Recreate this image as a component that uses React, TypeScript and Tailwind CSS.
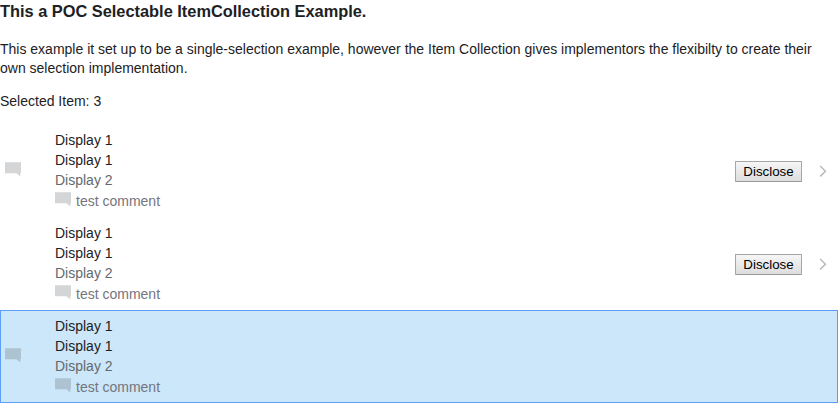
type Item = { id: number; commented: boolean; disclosable: boolean; selected: boolean };

const items: Item[] = [
  { id: 1, commented: true, disclosable: true, selected: false },
  { id: 2, commented: false, disclosable: true, selected: false },
  { id: 3, commented: true, disclosable: false, selected: true },
];

function CommentIcon() {
  return (
    <svg className="block h-[15px] w-4 shrink-0" viewBox="0 0 16 15" fill="#61656d" fillOpacity="0.27">
      <path d="M0 .3H16V11.2H15.3V14.6L11.3 11.2H0Z" />
    </svg>
  );
}

function Chevron() {
  return (
    <svg className="block h-3 w-2" viewBox="0 0 8 12" fill="none" stroke="#b8bcbd" strokeWidth="1.5">
      <path d="M1.2 1L6.4 6.2L1.2 11.4" />
    </svg>
  );
}

function Row({ item }: { item: Item }) {
  return (
    <li
      className={`flex h-[93px] border ${
        item.selected ? "border-[#5e9cfa] bg-[#cbe7f9]" : "border-transparent"
      }`}
    >
      <div className="w-[54px] shrink-0 pt-[37px] pl-1">{item.commented && <CommentIcon />}</div>
      <div className="flex-1 pt-[5px] leading-5">
        <div>Display 1</div>
        <div>Display 1</div>
        <div className="text-[#64696e]">Display 2</div>
        <div className="flex items-start gap-[5px] pt-px text-[#75757d]">
          <div className="pt-px">
            <CommentIcon />
          </div>
          <span>test comment</span>
        </div>
      </div>
      {item.disclosable && (
        <div className="flex items-start">
          <button className="mt-9 mr-[17px] h-[21px] w-[67px] rounded-[1px] border border-[#a6a6a6] border-b-[#999999] bg-linear-to-b from-[#f6f6f6] to-[#dddddd] text-[13.333px] leading-[19px] text-black">
            Disclose
          </button>
          <div className="mt-10 mr-[10px]">
            <Chevron />
          </div>
        </div>
      )}
    </li>
  );
}

export default function App() {
  return (
    <main className="h-[403px] overflow-hidden bg-white font-['Liberation_Sans',Arial,sans-serif] text-[14px] text-[#1d2124]">
      <h1 className="h-10 text-[16.38px] leading-[23px] font-bold">This a POC Selectable ItemCollection Example.</h1>
      <p className="h-[52px] leading-[19px]">
        This example it set up to be a single-selection example, however the Item Collection gives implementors the
        flexibilty to create their own selection implementation.
      </p>
      <p className="h-8 leading-[19px]">Selected Item: 3</p>
      <ul>
        {items.map((item) => (
          <Row key={item.id} item={item} />
        ))}
      </ul>
    </main>
  );
}
